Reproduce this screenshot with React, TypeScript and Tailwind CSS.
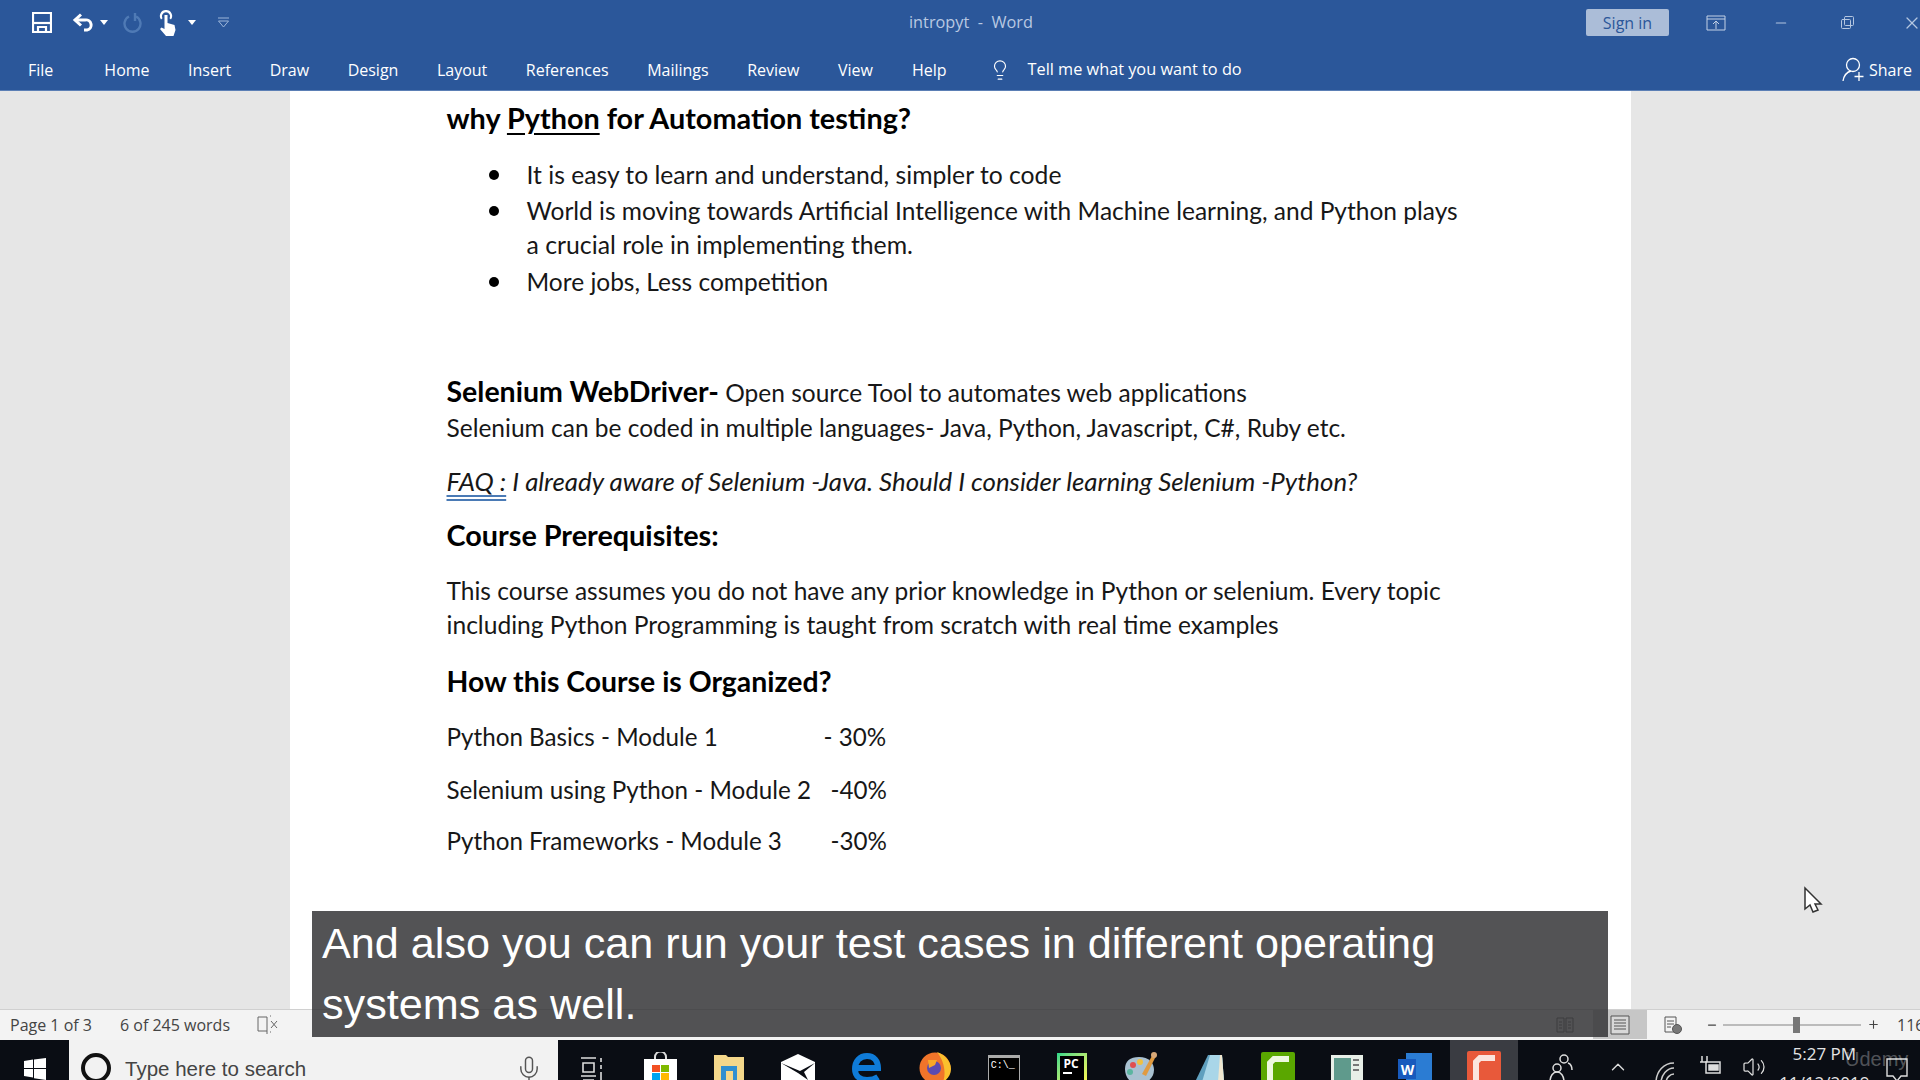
import React from 'react';
import { Mic, ChevronUp, Volume2, Lightbulb, Minus, Plus, Square, X } from 'lucide-react';

const TABS: [string, string][] = [
  ['File', 'ml-[28px]'], ['Home', 'ml-[51px]'], ['Insert', 'ml-[38.5px]'], ['Draw', 'ml-[38.5px]'], ['Design', 'ml-[38.5px]'],
  ['Layout', 'ml-[38.5px]'], ['References', 'ml-[38.5px]'], ['Mailings', 'ml-[38.5px]'], ['Review', 'ml-[38.5px]'], ['View', 'ml-[38.5px]'], ['Help', 'ml-[39px]'],
];

const Caret = ({ cls = 'fill-white' }: { cls?: string }) => (
  <svg width="8" height="5" viewBox="0 0 8 5" className={cls}><path d="M0 0h8L4 5z" /></svg>
);

const TitleBar = () => (
  <div className="relative flex h-[45px] items-center text-white">
    <div className="ml-[32px] flex items-center">
      {/* save */}
      <svg width="20" height="21" viewBox="0 0 20 21" fill="none" stroke="#fff" strokeWidth="2.2">
        <path d="M1 1h18v19H1z" /><path d="M1 11h18" /><path d="M6 20v-5h8v5" />
      </svg>
      {/* undo */}
      <svg className="ml-[20px]" width="21" height="20" viewBox="0 0 21 20" fill="none" stroke="#fff" strokeWidth="3">
        <path d="M9 1.5L3 7l6 5.5" /><path d="M3 7h10a5 5 0 0 1 2 10h-3" />
      </svg>
      <div className="ml-[7px]"><Caret /></div>
      {/* redo, greyed out */}
      <svg className="ml-[15px]" width="19" height="20" viewBox="0 0 19 20" fill="none" stroke="#4f7ab5" strokeWidth="2.4">
        <path d="M13 3.5a8 8 0 1 1-7 0" /><path d="M12 0v8" />
      </svg>
      {/* touch mode */}
      <svg className="ml-[17px]" width="17" height="26" viewBox="0 0 17 26" fill="#fff">
        <path d="M7 0a6 6 0 0 1 5 9.5l-1.500-1.300a4 4 0 1 0-7 0L2 9.500A6 6 0 0 1 7 0z" />
        <path d="M5.500 5h3v8l7 2 1 5-2 6H7l-6-7 1.500-1.500L5.500 19z" />
      </svg>
      <div className="ml-[12px]"><Caret /></div>
      <svg className="ml-[22px]" width="11" height="11" viewBox="0 0 11 11" fill="none" stroke="#9db6d9" strokeWidth="1">
        <path d="M0 1h11" /><path d="M0.500 4h10L5.500 10z" />
      </svg>
    </div>
    <span className="absolute left-[909px] top-[10px] whitespace-pre text-[16.300px] text-[#b9c9e2]">intropyt  -  Word</span>
    <div className="ml-auto flex items-center">
      <div className="flex h-[27px] w-[83px] items-center justify-center rounded-[2px] bg-[#abbdd8] text-[16px] text-[#2b579a]">Sign in</div>
      <svg className="ml-[37px]" width="20" height="16" viewBox="0 0 20 16" fill="none" stroke="#c4d2e6" strokeWidth="1">
        <path d="M1 1h18v14H1z" /><path d="M1 4h18" /><path d="M10 14V7M7 9l3-3 3 3" />
      </svg>
      <Minus className="ml-[47px] text-[#b4c6e0]" size={16} strokeWidth={1.75} />
      <div className="relative ml-[50px] h-4 w-4">
        <Square className="absolute left-[1px] top-[3px] text-[#b4c6e0]" size={12} strokeWidth={2} />
        <Square className="absolute left-[4px] top-0 text-[#b4c6e0]" size={12} strokeWidth={2} />
      </div>
      <X className="ml-[47px] mr-[-2px] text-[#b4c6e0]" size={20} strokeWidth={1.5} />
    </div>
  </div>
);

const TabBar = () => (
  <div className="flex h-[46px] items-center pt-[3px] text-[16px] text-white">
    {TABS.map(([t, m]) => <span key={t} className={m}>{t}</span>)}
    <Lightbulb className="ml-[42px] text-white" size={22} strokeWidth={1.25} />
    <span className="ml-[17px] text-[16.300px]">Tell me what you want to do</span>
    <div className="ml-auto mr-[8px] flex items-center gap-[3px]">
      <svg width="24" height="25" viewBox="0 0 24 25" fill="none" stroke="#fff" strokeWidth="1.3">
        <circle cx="11" cy="8" r="6.500" /><path d="M1 24c1-6 4-9 8-10" /><path d="M17 15v9M12.500 19.500h9" />
      </svg>
      <span>Share</span>
    </div>
  </div>
);

const Line = ({ cls, children }: { cls: string; children: React.ReactNode }) => (
  <div className={`h-[34px] whitespace-pre leading-[34px] ${cls}`}>{children}</div>
);

const Bullet = ({ cls, children }: { cls: string; children: React.ReactNode }) => (
  <div className={`relative ml-[80px] h-[34px] whitespace-pre leading-[34px] ${cls}`}>
    <span className="absolute left-[-38px] top-[12px] h-[10px] w-[10px] rounded-full bg-black" />
    {children}
  </div>
);

const Page = () => (
  <div className="mx-auto h-full w-[1341px] bg-white pl-[157px] pt-[10px] font-['Lato','Carlito',sans-serif] text-[24.5px] text-[#171717]">
    <Line cls="text-[28.800px] font-bold text-black">why <span className="underline underline-offset-[4px]">Python</span> for Automation testing?</Line>
    <Bullet cls="mt-[23px] text-[24.700px]">It is easy to learn and understand, simpler to code</Bullet>
    <Bullet cls="mt-[2px]">World is moving towards Artificial Intelligence with Machine learning, and Python plays</Bullet>
    <div className="ml-[80px] h-[34px] text-[24.800px] leading-[34px]">a crucial role in implementing them.</div>
    <Bullet cls="mt-[3px]">More jobs, Less competition</Bullet>
    <Line cls="mt-[75px]"><span className="text-[28.500px] font-bold text-black">Selenium WebDriver-</span> Open source Tool to automates web applications</Line>
    <Line cls="mt-[3px]">Selenium can be coded in multiple languages- Java, Python, Javascript, C#, Ruby etc.</Line>
    <Line cls="mt-[19px] text-[25.800px] italic"><span className="underline decoration-[#4a7ab5] decoration-double underline-offset-[4px]">FAQ :</span> I already aware of Selenium -Java. Should I consider learning Selenium -Python?</Line>
    <Line cls="mt-[20px] text-[28.800px] font-bold text-black">Course Prerequisites:</Line>
    <Line cls="mt-[22px]">This course assumes you do not have any prior knowledge in Python or selenium. Every topic</Line>
    <Line cls="text-[24.600px]">including Python Programming is taught from scratch with real time examples</Line>
    <Line cls="mt-[22px] text-[28.400px] font-bold text-black">How this Course is Organized?</Line>
    <Line cls="mt-[22px] text-[24.200px]"><span className="inline-block w-[377px]">Python Basics - Module 1</span>- 30%</Line>
    <Line cls="mt-[19px] text-[24.200px]"><span className="inline-block w-[384px]">Selenium using Python - Module 2</span>-40%</Line>
    <Line cls="mt-[17px] text-[24.200px]"><span className="inline-block w-[384px]">Python Frameworks - Module 3</span>-30%</Line>
  </div>
);

const StatusBar = () => (
  <div className="flex h-[31px] items-center border-t border-[#d0d0d0] bg-[#f3f3f3] pb-[1px] text-[16px] text-[#444]">
    <span className="ml-[10px]">Page 1 of 3</span>
    <span className="ml-[28px]">6 of 245 words</span>
    <svg className="ml-[26px]" width="24" height="20" viewBox="0 0 24 20" fill="none" stroke="#666" strokeWidth="1">
      <path d="M11 2H2v14h9V2M11 19v-3" /><path d="M15 1h-1M15 17h-1" /><path d="M15 6l6 7M21 6l-6 7" />
    </svg>
    <div className="ml-auto flex h-full items-center">
      <svg width="18" height="18" viewBox="0 0 18 18" fill="none" stroke="#666"><path d="M1 2h7v14H1zM10 2h7v14h-7zM3 6h3M3 9h3M3 12h3M12 6h3M12 9h3M12 12h3" /></svg>
      <div className="ml-[19px] flex h-full w-[54px] items-center justify-center bg-[#c6c6c6]">
        <svg width="20" height="20" viewBox="0 0 20 20" fill="#d8d8d8" stroke="#555"><path d="M1 1h18v18H1zM4 5h12M4 8h12M4 11h12M4 14h12" /></svg>
      </div>
      <svg className="ml-[16px]" width="20" height="20" viewBox="0 0 20 20" fill="none" stroke="#555"><path d="M2 2h11v15H2zM4 6h7M4 9h7M4 12h4" /><circle cx="14" cy="14" r="4.500" fill="#777" /></svg>
      <Minus className="ml-[23px] text-[#444]" size={12} strokeWidth={2.5} />
      <div className="relative ml-[5px] h-[2px] w-[138px] bg-[#bbb]">
        <span className="absolute left-[70px] top-[-7px] h-[16px] w-[7px] bg-[#777]" />
      </div>
      <Plus className="ml-[6px] text-[#444]" size={13} strokeWidth={2} />
      <span className="ml-[17px] w-[23px] overflow-hidden whitespace-nowrap">116</span>
    </div>
  </div>
);

const Slot = ({ cls = '', children }: { cls?: string; children: React.ReactNode }) => (
  <div className={`flex h-[40px] w-[68.600px] shrink-0 items-start justify-center overflow-hidden ${cls}`}>{children}</div>
);

const Taskbar = () => (
  <div className="flex h-[40px] items-start overflow-hidden bg-[#0a0d14] font-['Open_Sans',sans-serif] text-white">
    <div className="flex h-[40px] w-[69px] shrink-0 items-start justify-center pt-[18px]">
      <svg width="22" height="22" viewBox="0 0 22 22" fill="#fff"><path d="M0 3l9-1.500V10H0zM10 1.400L22 0v10H10zM0 11h9v8.500L0 18zM10 11h12v11l-12-1.700z" /></svg>
    </div>
    <div className="flex h-[40px] w-[489px] shrink-0 items-start bg-[#f2f2f2]">
      <span className="ml-[12px] mt-[13px] h-[30px] w-[30px] shrink-0 rounded-full border-[4px] border-[#111]" />
      <span className="ml-[14px] mt-[14px] font-['Liberation_Sans',sans-serif] text-[20.500px] text-[#444]">Type here to search</span>
      <Mic className="ml-auto mr-[15px] mt-[15px] text-[#555]" size={28} strokeWidth={1.25} />
    </div>
    <div className="flex h-[40px] min-w-0 flex-1 items-start">
      <Slot>
        <svg className="mt-[17px]" width="24" height="26" viewBox="0 0 24 26" fill="none" stroke="#ddd" strokeWidth="1.600"><path d="M1 1h15M3 6h11v9H3zM1 19h15M3 23h11M21 1v4M21 8v4M21 15v8" /></svg>
      </Slot>
      <Slot>
        <svg className="mt-[12px]" width="33" height="30" viewBox="0 0 33 30">
          <path d="M11 8V5a5 5 0 0 1 11 0v3" fill="none" stroke="#ddd" strokeWidth="2" />
          <path d="M0 7h33v23H0z" fill="#fff" />
          <path d="M8 13h8v7H8z" fill="#f25022" /><path d="M17 13h8v7h-8z" fill="#7fba00" /><path d="M8 21h8v7H8z" fill="#00a4ef" /><path d="M17 21h8v7h-8z" fill="#ffb900" />
        </svg>
      </Slot>
      <Slot>
        <svg className="mt-[15px]" width="30" height="26" viewBox="0 0 30 26">
          <path d="M0 0h12l2 2h16v24H0z" fill="#f4d78a" />
          <path d="M7 11h16v15H7z" fill="#2f8fd0" /><path d="M12 16h7v10h-7z" fill="#f4d78a" />
        </svg>
      </Slot>
      <Slot>
        <svg className="mt-[14px]" width="34" height="26" viewBox="0 0 34 26">
          <path d="M0 8L17 0l17 8v18H0z" fill="#fff" /><path d="M0 9l19 8 15-8-11 9 4 8-10-7z" fill="#0a0d14" />
        </svg>
      </Slot>
      <Slot>
        <svg className="mt-[13px]" width="30" height="27" viewBox="0 0 30 27" fill="none" stroke="#0f7bd8" strokeWidth="6">
          <path d="M5 15h21c0-7-4-12-11-12S3 8 3 16s6 11 12 11c4 0 8-1 11-3" />
        </svg>
      </Slot>
      <Slot>
        <svg className="mt-[12px]" width="32" height="28" viewBox="0 0 32 28">
          <circle cx="16" cy="16" r="15.500" fill="#f0742a" /><path d="M18 0c8 3 14 9 14 17 0 6-4 11-8 13 3-8 2-20-6-30z" fill="#fbc02d" /><circle cx="15" cy="16" r="7" fill="#5c4bb0" /><path d="M9 8h9l-2 5-6 3z" fill="#f9a825" />
        </svg>
      </Slot>
      <Slot>
        <div className="mt-[15px] h-[30px] w-[32px] border border-[#aaa] border-t-[3px] bg-black pl-[2px] pt-[3px] font-mono text-[10px] leading-none text-white">C:\_</div>
      </Slot>
      <Slot>
        <div className="mt-[13px] h-[30px] w-[30px] bg-gradient-to-br from-[#21d789] to-[#fcf84a] p-[3px]">
          <div className="h-full w-full bg-black pl-[3px] text-[12px] font-bold leading-[16px] text-white">PC<div className="h-[2px] w-[9px] bg-white" /></div>
        </div>
      </Slot>
      <Slot>
        <svg className="mt-[12px]" width="33" height="30" viewBox="0 0 33 30">
          <path d="M14 5c10 0 15 6 15 13s-6 14-15 14S0 25 0 17 5 5 14 5z" fill="#a9c1d1" /><circle cx="8" cy="13" r="3" fill="#e05050" /><circle cx="15" cy="10" r="3" fill="#f0c040" /><circle cx="5" cy="20" r="3" fill="#5bb5a0" /><path d="M17 22L28 2l3 2-10 20z" fill="#e09a40" /><circle cx="29" cy="3" r="3" fill="#d8a878" />
        </svg>
      </Slot>
      <Slot>
        <svg className="mt-[14px]" width="32" height="28" viewBox="0 0 32 28"><path d="M14 1h14l2 27H1z" fill="#5f9fbe" /><path d="M16 1h12l2 27H8z" fill="#a9d6e8" /><path d="M26 1h2l2 27h-6z" fill="#efe7d0" /></svg>
      </Slot>
      <Slot>
        <svg className="mt-[12px]" width="34" height="28" viewBox="0 0 34 28">
          <rect width="34" height="34" rx="2" fill="#5aa700" /><path d="M28 7H13l-4 4v23" fill="none" stroke="#eef8e0" strokeWidth="6" />
        </svg>
      </Slot>
      <Slot>
        <div className="mt-[15px] h-[30px] w-[32px] bg-[#e8efe8] p-[3px]">
          <div className="flex gap-[2px]"><div className="h-[22px] w-[17px] bg-[#5f9a8c]" /><div className="flex flex-col gap-[3px] pt-[1px]"><div className="h-[2px] w-[6px] bg-[#777]" /><div className="h-[2px] w-[6px] bg-[#777]" /><div className="h-[2px] w-[6px] bg-[#777]" /></div></div>
        </div>
      </Slot>
      <Slot>
        <div className="relative mt-[13px] h-[30px] w-[34px]">
          <div className="absolute right-0 top-0 h-full w-[26px] bg-[#2b7cd3]" />
          <div className="absolute left-0 top-[6px] flex h-[20px] w-[18px] items-center justify-center bg-[#185abd] text-[14px] font-bold text-white">W</div>
        </div>
      </Slot>
      <Slot cls="bg-[#3a3c42]">
        <svg className="mt-[11px]" width="34" height="29" viewBox="0 0 34 29">
          <rect width="34" height="34" rx="2" fill="#e8593a" /><path d="M28 7H13l-4 4v23" fill="none" stroke="#fbe5dd" strokeWidth="6" />
        </svg>
      </Slot>
      <svg className="ml-[31px] mt-[14px] shrink-0" width="24" height="26" viewBox="0 0 24 26" fill="none" stroke="#ddd" strokeWidth="1.500"><circle cx="15" cy="5" r="4" /><circle cx="8" cy="14" r="4" /><path d="M1 28c0-6 3-10 7-10s7 4 7 10M19 9c3 1 4 4 4 7" /></svg>
      <ChevronUp className="ml-[34px] mt-[16px] shrink-0 text-[#ddd]" size={22} strokeWidth={1.500} />
      <svg className="ml-[25px] mt-[17px] shrink-0" width="22" height="26" viewBox="0 0 22 26" fill="none" stroke="#ccc" strokeWidth="1.500"><path d="M2 26c0-12 8-20 18-20M7 26c0-8 6-15 13-15M12 26c0-5 4-9 8-9" /></svg>
      <svg className="ml-[23px] mt-[16px] shrink-0" width="22" height="20" viewBox="0 0 22 20" fill="none" stroke="#ddd" strokeWidth="1.500"><path d="M7 6h14v11H7z" /><path d="M3 0v6M8 0v6M1 6h7" /><path d="M10 9h9v5h-9z" fill="#ddd" /></svg>
      <Volume2 className="ml-[21px] mt-[15px] shrink-0 text-[#ddd]" size={24} strokeWidth={1.250} />
      <div className="ml-[22px] flex w-[72px] shrink-0 flex-col items-center whitespace-nowrap text-[17px] leading-[20px] text-[#e4e4e4]">
        <span className="mt-[4px]">5:27 PM</span>
        <span className="mt-[9px]">11/12/2019</span>
      </div>
      <svg className="ml-[25px] mt-[17px] shrink-0" width="24" height="26" viewBox="0 0 24 26" fill="none" stroke="#ddd" strokeWidth="1.400"><path d="M2 2h20v17h-6l-4 5-4-5H2z" /></svg>
    </div>
  </div>
);

export default function App() {
  return (
    <div className="relative flex h-[1080px] w-[1920px] flex-col overflow-hidden bg-[#e6e6e6] font-['Open_Sans',sans-serif]">
      <header className="h-[91px] shrink-0 border-b border-[#5b7fb5] bg-[#2b579a]">
        <TitleBar />
        <TabBar />
      </header>
      <main className="min-h-0 flex-1 overflow-hidden">
        <Page />
      </main>
      <StatusBar />
      <Taskbar />
      {/* caption overlay */}
      <div className="absolute left-[312px] top-[911px] h-[126px] w-[1296px] bg-[#353537]/85 px-[10px] pt-[2px] font-['Liberation_Sans',sans-serif] text-[43.200px] leading-[61px] text-white">
        And also you can run your test cases in different operating<br />systems as well.
      </div>
      {/* mouse pointer */}
      <svg className="absolute left-[1803px] top-[886px]" width="20" height="28" viewBox="0 0 20 28" fill="#fff" stroke="#333" strokeWidth="1.500">
        <path d="M2 2v21l5-4 3 7 5-2-3-6h6z" />
      </svg>
      <span className="absolute left-[1845px] top-[1044px] font-['Liberation_Sans',sans-serif] text-[20px] text-white/30">Ûdemy</span>
    </div>
  );
}
